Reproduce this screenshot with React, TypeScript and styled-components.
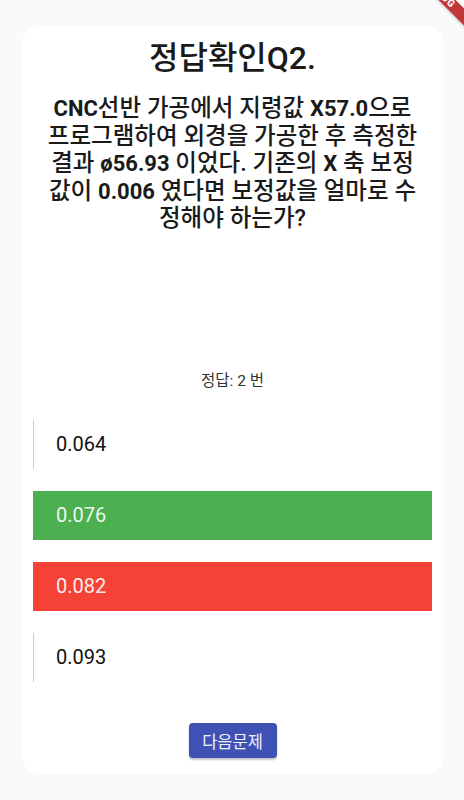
import React from "react";
import styled, { createGlobalStyle } from "styled-components";

const GlobalStyle = createGlobalStyle`
  html, body {
    margin: 0;
    padding: 0;
    background: #fafafa;
  }
  body {
    font-family: "Roboto", "Noto Sans CJK KR", sans-serif;
    color: #212121;
  }
`;

type Choice = { label: string; state: "plain" | "correct" | "wrong" };

const choices: Choice[] = [
  { label: "0.064", state: "plain" },
  { label: "0.076", state: "correct" },
  { label: "0.082", state: "wrong" },
  { label: "0.093", state: "plain" },
];

const Screen = styled.div`
  position: relative;
  width: 464px;
  height: 800px;
  overflow: hidden;
  background: #fafafa;
  padding: 25px 20px 0 22px;
  box-sizing: border-box;
`;

const Card = styled.div`
  height: 750px;
  background: #ffffff;
  border-radius: 20px;
  box-shadow: 0 0 2px rgba(0, 0, 0, 0.03);
  padding: 14px 12px 17px 11px;
  box-sizing: border-box;
  display: flex;
  flex-direction: column;
  align-items: stretch;
`;

const Title = styled.h1`
  margin: 0;
  font-size: 32px;
  line-height: 38px;
  font-weight: 500;
  text-align: center;
  color: #1a1a1a;
`;

const Question = styled.p`
  margin: 18px 0 0;
  font-size: 23.5px;
  line-height: 27.5px;
  font-weight: 500;
  text-align: center;
  color: #1a1a1a;
  white-space: nowrap;
`;

const Strong = styled.span`
  font-weight: 700;
  font-size: 22px;
`;

const Answer = styled.div`
  margin-top: 138px;
  font-size: 15.5px;
  line-height: 20px;
  text-align: center;
  color: #333333;
`;

const Options = styled.div`
  margin-top: 29px;
  display: flex;
  flex-direction: column;
  gap: 22px;
`;

const Option = styled.div<{ $state: Choice["state"] }>`
  height: 49px;
  display: flex;
  align-items: center;
  padding-left: 22px;
  box-sizing: border-box;
  font-size: 20px;
  background: ${(p) =>
    p.$state === "correct" ? "#4caf50" : p.$state === "wrong" ? "#f44336" : "#ffffff"};
  color: ${(p) => (p.$state === "plain" ? "#111111" : "rgba(255,255,255,0.92)")};
  border-left: 1.5px solid
    ${(p) => (p.$state === "plain" ? "#c9cbe0" : "transparent")};
`;

const Footer = styled.div`
  margin-top: auto;
  display: flex;
  justify-content: center;
`;

const NextButton = styled.button`
  width: 88px;
  height: 35px;
  border: none;
  border-radius: 4px;
  background: #3f51b5;
  color: #f2f2f8;
  font-family: "Noto Sans CJK KR", "Roboto", sans-serif;
  font-size: 16.5px;
  box-shadow: 0 2px 2px rgba(0, 0, 0, 0.22), 0 0 1px rgba(0, 0, 0, 0.12);
  cursor: pointer;
`;

const DebugBanner = styled.div`
  position: absolute;
  left: 381px;
  top: -12px;
  width: 120px;
  height: 12px;
  background: rgba(183, 28, 28, 0.88);
  color: #ffffff;
  font-size: 10px;
  line-height: 12px;
  font-weight: 800;
  letter-spacing: 0.5px;
  text-align: center;
  transform: rotate(45deg);
  box-shadow: 0 1px 3px rgba(0, 0, 0, 0.2);
`;

export default function App() {
  return (
    <>
      <GlobalStyle />
      <Screen>
        <Card>
          <Title>정답확인Q2.</Title>
          <Question>
            <Strong>CNC</Strong>선반 가공에서 지령값 <Strong>X57.0</Strong>으로
            <br />
            프로그램하여 외경을 가공한 후 측정한
            <br />
            결과 <Strong>ø56.93</Strong> 이었다. 기존의 <Strong>X</Strong> 축 보정
            <br />
            값이 <Strong>0.006</Strong> 였다면 보정값을 얼마로 수
            <br />
            정해야 하는가?
          </Question>
          <Answer>정답: 2 번</Answer>
          <Options>
            {choices.map((c) => (
              <Option key={c.label} $state={c.state}>
                {c.label}
              </Option>
            ))}
          </Options>
          <Footer>
            <NextButton>다음문제</NextButton>
          </Footer>
        </Card>
        <DebugBanner>DEBUG</DebugBanner>
      </Screen>
    </>
  );
}
